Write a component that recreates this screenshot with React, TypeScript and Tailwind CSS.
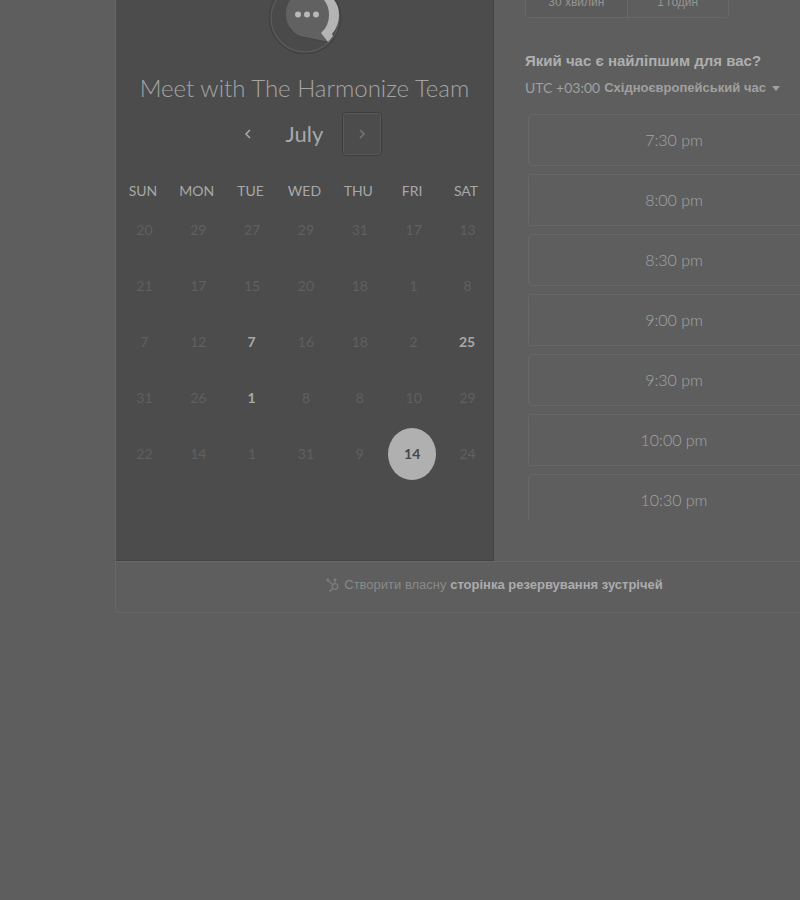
const WEEKDAYS = ["SUN", "MON", "TUE", "WED", "THU", "FRI", "SAT"];

const WEEKS = [
  [20, 29, 27, 29, 31, 17, 13],
  [21, 17, 15, 20, 18, 1, 8],
  [7, 12, 7, 16, 18, 2, 25],
  [31, 26, 1, 8, 8, 10, 29],
  [22, 14, 1, 31, 9, 14, 24],
];

const AVAILABLE = ["2-2", "2-6", "3-2"];
const SELECTED = "4-5";

const TIMES = ["7:30 pm", "8:00 pm", "8:30 pm", "9:00 pm", "9:30 pm", "10:00 pm", "10:30 pm"];

function Logo() {
  return (
    <svg viewBox="265 0 80 60" className="mx-auto block h-[60px] w-20" aria-label="Harmonize">
      <circle cx="305" cy="18" r="35.5" fill="#4a4a4a" stroke="#434343" strokeWidth="1.5" />
      <circle cx="305" cy="18" r="34" fill="none" stroke="#5c5c5c" strokeWidth="1.2" />
      <path d="M290 0Q286 6 286 14Q286 22 290 28Q294 35 302 37L327 42L330 0Z" fill="#616161" />
      <path d="M290 28Q294 35 302 37L327 42" fill="none" stroke="#434343" strokeWidth="1" />
      <path
        d="M324 0L334 0Q339 6 339 15Q339 26 332 34L333 36L328 42L321 33Q329 26 329 15Q329 6 324 0Z"
        fill="#b4b4b4"
      />
      <circle cx="298" cy="14.5" r="3" fill="#b8b8b8" />
      <circle cx="307" cy="14.5" r="3" fill="#b8b8b8" />
      <circle cx="316" cy="14.5" r="3" fill="#b8b8b8" />
    </svg>
  );
}

function Chevron({ left = false }: { left?: boolean }) {
  return (
    <svg viewBox="0 0 8 12" className="h-3 w-2" fill="none" stroke="currentColor" strokeWidth="1.5">
      <path d={left ? "M6 2L2 6L6 10" : "M2 2L6 6L2 10"} />
    </svg>
  );
}

function Sprocket() {
  return (
    <svg viewBox="0 0 14 14" className="h-3.5 w-3.5 text-[#7c7c7c]" fill="none" stroke="currentColor" strokeWidth="1.3">
      <circle cx="9" cy="8.5" r="2.8" />
      <path d="M9 5.5V2M6.8 6.8L2 2.5M7 10.5L4.5 12.7" />
      <circle cx="9" cy="1.8" r="0.8" fill="currentColor" />
      <circle cx="1.8" cy="2" r="0.9" fill="currentColor" />
      <circle cx="4.3" cy="12.7" r="0.5" fill="currentColor" />
    </svg>
  );
}

function dayClass(key: string) {
  if (key === SELECTED) return "h-[52px] w-12 rounded-[50%] bg-[#b0b0b0] font-bold text-[#484848]";
  if (AVAILABLE.includes(key)) return "h-[52px] w-12 pl-0.5 font-bold text-[#a8a8a8]";
  return "h-[52px] w-12 pl-[3px] text-[#606060]";
}

function Calendar() {
  return (
    <section className="h-[561px] w-[378px] shrink-0 border-b border-r border-[#434343] bg-[#4c4c4c] font-[Lato,sans-serif]">
      <Logo />
      <h1 className="mt-2.5 text-center text-2xl font-light leading-9 text-[#a4a4a4]">
        Meet with The Harmonize Team
      </h1>
      <div className="mt-1.5 flex items-center justify-center">
        <button type="button" aria-label="Previous month" className="flex h-11 w-10 items-center justify-center text-[#aaaaaa]">
          <Chevron left />
        </button>
        <h2 className="w-[74px] text-center text-[22px] leading-8 text-[#a8a8a8]">July</h2>
        <button
          type="button"
          aria-label="Next month"
          className="flex h-11 w-10 items-center justify-center rounded-sm border border-[#3c3c3c] text-[#777777] inset-ring inset-ring-[#5a5a5a]"
        >
          <Chevron />
        </button>
      </div>
      <table className="mt-6 w-full table-fixed border-collapse text-center text-sm">
        <thead>
          <tr className="h-[22px] text-[#a8a8a8]">
            {WEEKDAYS.map((d) => (
              <th key={d} scope="col" className="p-0 text-center font-normal">
                {d}
              </th>
            ))}
          </tr>
        </thead>
        <tbody>
          {WEEKS.map((week, r) => (
            <tr key={r} className="h-14">
              {week.map((day, c) => (
                <td key={c} className="p-0">
                  <button type="button" className={dayClass(`${r}-${c}`)}>
                    {day}
                  </button>
                </td>
              ))}
            </tr>
          ))}
        </tbody>
      </table>
    </section>
  );
}

function TimePicker() {
  return (
    <section className="min-w-0 flex-1 pl-[31px]">
      <div className="flex h-[18px] items-end overflow-hidden">
        <div className="flex h-10 w-[204px] rounded-b-sm border border-[#686868] text-xs text-[#949494]">
          <button type="button" className="flex-1 border-r border-[#686868] bg-[#5b5b5b] pt-2">
            30 хвилин
          </button>
          <button type="button" className="flex-1 pt-2">
            1 годин
          </button>
        </div>
      </div>
      <h2 className="mt-8 whitespace-nowrap text-[15px] font-bold leading-[22px] text-[#aeaeae]">
        Який час є найліпшим для вас?
      </h2>
      <button type="button" className="mt-1.5 flex h-5 items-center gap-1 whitespace-nowrap text-sm text-[#a0a0a0]">
        <span className="font-[Lato,sans-serif]">UTC +03:00</span>
        <span className="text-[13px] font-bold">Східноєвропейський час</span>
        <svg viewBox="0 0 8 5" className="ml-0.5 h-[5px] w-2" fill="currentColor">
          <path d="M0 0H8L4 5Z" />
        </svg>
      </button>
      <ul className="ml-[3px] mt-4 flex h-[406px] w-[292px] flex-col gap-2 overflow-hidden font-[Lato,sans-serif] text-base font-light text-[#a4a4a4]">
        {TIMES.map((t) => (
          <li key={t} className="shrink-0">
            <button type="button" className="h-[52px] w-full rounded-sm border border-[#676767]">
              {t}
            </button>
          </li>
        ))}
      </ul>
    </section>
  );
}

export default function App() {
  return (
    <div className="min-h-screen overflow-hidden bg-[#5e5e5e] pl-[115px] font-['Liberation_Sans',Arial,sans-serif]">
      <main className="w-[758px] rounded-b border-b border-l border-[#676767]">
        <div className="flex">
          <Calendar />
          <TimePicker />
        </div>
        <footer className="flex h-[51px] items-center justify-center gap-1 border-t border-[#676767] pb-1 text-[13px] text-[#8a8a8a]">
          <Sprocket />
          <p>
            Створити власну{" "}
            <a href="#create" className="font-bold text-[#acacac]">
              сторінка резервування зустрічей
            </a>
          </p>
        </footer>
      </main>
    </div>
  );
}
